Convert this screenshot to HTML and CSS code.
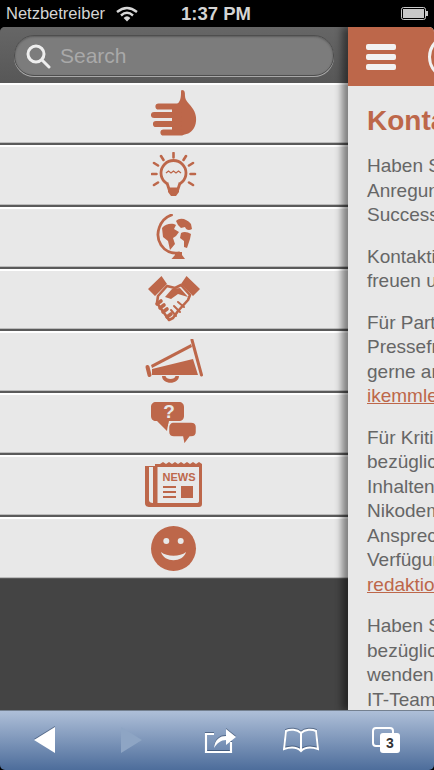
FILE: index.html
```html
<!DOCTYPE html>
<html>
<head lang="de">
    <meta charset="UTF-8">
    <title>Kontakt</title>
    <link rel="stylesheet" href="styles.css">
</head>
<body>
<div id="phone">
    <div id="status">
        <span class="carrier">Netzbetreiber</span>
        <svg class="wifi" width="24" height="16" viewBox="0 0 24 16">
            <path d="M2 6 Q12 -2 22 6" fill="none" stroke="#d8d8d8" stroke-width="2.4"/>
            <path d="M6 9.5 Q12 4 18 9.5" fill="none" stroke="#d8d8d8" stroke-width="2.4"/>
            <path d="M8.6 12 Q12 8.6 15.4 12 L12 15.5 Z" fill="#d8d8d8"/>
        </svg>
        <span class="time">1:37 PM</span>
        <svg class="battery" width="28" height="13" viewBox="0 0 28 13">
            <rect x="0.5" y="0.5" width="24" height="12" rx="2" fill="none" stroke="#c8c8c8"/>
            <rect x="2" y="2" width="21" height="9" fill="#c8c8c8"/>
            <rect x="25" y="4" width="2" height="5" fill="#c8c8c8"/>
        </svg>
    </div>

    <div id="main">
        <div id="menu">
            <div id="search">
                <div class="searchbox">
                    <svg width="26" height="26" viewBox="0 0 26 26">
                        <circle cx="11" cy="11" r="8" fill="none" stroke="#eeeeee" stroke-width="3"/>
                        <path d="M17 17 L24 24" stroke="#eeeeee" stroke-width="3" stroke-linecap="round"/>
                    </svg>
                    <span>Search</span>
                </div>
            </div>

            <ul id="items">
                <li>
                    <svg width="46" height="46" viewBox="0 0 46 46">
                        <path d="M31 0 C34 0 34 3 34 6 C34 11 39 14 42 19 C46 25 46 33 43 38 C40 43 35 45 30 45 H21 V14 H26 C29 12 30 8 30 3 C30 1 30 0 31 0 Z" fill="#bd674a"/>
                        <path d="M7.500 16.500 H28 M3 25 H28 M5 34 H28 M12.500 42.500 H30" fill="none" stroke="#bd674a" stroke-width="6.200" stroke-linecap="round"/>
                    </svg>
                </li>
                <li>
                    <svg width="46" height="46" viewBox="0 0 46 46">
                        <circle cx="22.500" cy="21" r="12.500" fill="none" stroke="#bd674a" stroke-width="2.800"/>
                        <path d="M16 31 L18 37 L27 37 L29 31" fill="#e8e8e8" stroke="#bd674a" stroke-width="2.800"/>
                        <path d="M17 36 H28 V40 L25 44 H20 L17 40 Z" fill="#bd674a"/>
                        <path d="M15 21 l2.500 -2 l2.500 2 l2.500 -2 l2.500 2 l2.500 -2 l2.500 2" fill="none" stroke="#bd674a" stroke-width="1.300"/>
                        <path d="M22.500 1 V5.500 M10 4 L12.500 8 M35 4 L32.500 8 M3 11 L7 13.500 M42 11 L38 13.500 M1 22 H5.500 M39.500 22 H44 M3 33 L7 30.500 M42 33 L38 30.500" stroke="#bd674a" stroke-width="2.600" stroke-linecap="round"/>
                    </svg>
                </li>
                <li>
                    <svg width="38" height="46" viewBox="0 0 38 46">
                        <path d="M16.500 1 C5 5 -1 20 6 31 C10 37 17 40 24 39" fill="none" stroke="#bd674a" stroke-width="2.800" stroke-linecap="round"/>
                        <path d="M20 38 H27 V41 L30 45 H16.500 L20 41 Z" fill="#bd674a"/>
                        <path d="M7 14 C11 9 18 9 21 11 L19 15 L24 18 L21 22 L18 24 L20 30 L15 36 L13 27 L8 23 Z" fill="#bd674a"/>
                        <path d="M21 7 C25 3 32 5 36 10 L37 15 C34 17 31 16 30 13 L26 14 L23 11 Z" fill="#bd674a"/>
                        <path d="M26 19 C29 17 33 18 36 20 L35 25 L32 34 L29 33 L29 27 L25 24 Z" fill="#bd674a"/>
                    </svg>
                </li>
                <li>
                    <svg width="52" height="46" viewBox="0 0 52 46">
                        <path d="M13.500 0 L19 8 L7 20 L0 13 Z M38.500 0 L33 8 L45 20 L52 13 Z" fill="#bd674a"/>
                        <path d="M10 20 L19 10 L27 12 L33 9 L42 19 L40 24 L30 35 L25 42 L21 44 L9 27 Z" fill="none" stroke="#bd674a" stroke-width="2.600" stroke-linejoin="round"/>
                        <path d="M17 21 L24 13 L32 12 L40 21 L30 18 L23 23 Z" fill="#bd674a"/>
                        <path d="M9 28 L13 25 M12 32 L16 29 M15 36 L19 33 M19 41 L23 38" stroke="#bd674a" stroke-width="3.600" stroke-linecap="round"/>
                        <path d="M30 26 L36 31 M26 30 L32 36 M23 34 L28 40" stroke="#bd674a" stroke-width="2" stroke-linecap="round"/>
                    </svg>
                </li>
                <li>
                    <svg width="58" height="45" viewBox="0 0 58 45">
                        <path d="M47 1 L56.500 36" stroke="#bd674a" stroke-width="3" stroke-linecap="round"/>
                        <path d="M2.500 28 L4.500 36" stroke="#bd674a" stroke-width="4" stroke-linecap="round"/>
                        <path d="M6 26 L46 5 L47 8 L7 29 Z" fill="#bd674a"/>
                        <path d="M7 30 L48 20 L53 36 L7 36 Z" fill="#bd674a"/>
                        <path d="M17 37 C17 46 34 46 34 37 L30.500 37 C30 41 21 41 20.500 37 Z" fill="#bd674a"/>
                    </svg>
                </li>
                <li>
                    <svg width="46" height="45" viewBox="0 0 46 45">
                        <path d="M5 1 H28 C31 1 33 3 33 6 V15 C33 18 31 20 28 20 H18 L16 30 L6 20 H5 C2 20 0 18 0 15 V6 C0 3 2 1 5 1 Z" fill="#bd674a"/>
                        <path d="M22 21 H40 C43 21 45.500 23 45.500 26 V31 C45.500 34 43 36 40 36 H39 L33 44 L31.500 36 H23 C20 36 17.500 34 17.500 31 V26 C17.500 23 20 21 22 21 Z" fill="#bd674a" stroke="#e8e8e8" stroke-width="1.500"/>
                        <text x="18" y="17" class="qmark">?</text>
                    </svg>
                </li>
                <li>
                    <svg width="58" height="46" viewBox="0 0 58 46">
                        <path d="M0 4 V41 C0 44 2 45 5 45 H54 C56 45 57 44 57 42 V2 L54 0 L51 2 L48 0 L45 2 L42 0 L39 2 L36 0 L33 2 L30 0 L27 2 L24 0 L21 2 L18 0 L15 2 L10 2 V4 Z" fill="#bd674a"/>
                        <path d="M12.500 5 H54 V39 C54 40.500 53 41 51.500 41 H12.500 Z" fill="#e8e8e8"/>
                        <path d="M4 5 H8 V41 C5.500 41 4 40 4 38 Z" fill="#e8e8e8"/>
                        <text x="17.500" y="19" class="news">NEWS</text>
                        <rect x="36" y="24" width="12" height="12" fill="#bd674a"/>
                        <path d="M18 25 H31 M18 30 H31 M18 35 H31" stroke="#bd674a" stroke-width="2"/>
                    </svg>
                </li>
                <li>
                    <svg width="46" height="46" viewBox="0 0 46 46">
                        <circle cx="22.500" cy="22.500" r="22.500" fill="#bd674a"/>
                        <circle cx="15.300" cy="15" r="3" fill="#e8e8e8"/>
                        <circle cx="29.700" cy="15" r="3" fill="#e8e8e8"/>
                        <path d="M10 26 C16 31 29 31 35 26 C32 37 13 37 10 26 Z" fill="#e8e8e8"/>
                    </svg>
                </li>
            </ul>
        </div>

        <div id="page">
            <div id="pagehead">
                <div class="burger"><i></i><i></i><i></i></div>
                <div class="logo"></div>
            </div>
            <div id="pagetext">
                <h1>Kontakt</h1>
                <p>Haben Sie Fragen oder<br>Anregungen zum Thema<br>Successful Ageing?</p>
                <p>Kontaktieren Sie uns, wir<br>freuen uns auf Sie!</p>
                <p>Für Partnerschaften und<br>Pressefragen stehen wir<br>gerne an dieser Stelle:<br><a href="#">ikemmler@example.de</a></p>
                <p>Für Kritik und Anregungen<br>bezüglich der redaktionellen<br>Inhalten steht Ihnen Frau<br>Nikodem als<br>Ansprechpartnerin zur<br>Verfügung:<br><a href="#">redaktion@example.de</a></p>
                <p>Haben Sie technische Fragen<br>bezüglich der Website,<br>wenden Sie sich an unser<br>IT-Team</p>
            </div>
        </div>
    </div>

    <div id="toolbar">
        <svg class="tool" width="24" height="28" viewBox="0 0 24 28"><path d="M22 1 V27 L1 14 Z" fill="#ffffff"/></svg>
        <svg class="tool fwd" width="24" height="28" viewBox="0 0 24 28"><path d="M2 1 V27 L23 14 Z" fill="#8ea5c4"/></svg>
        <svg class="tool share" width="34" height="28" viewBox="0 0 34 28">
            <path d="M10 8 H2 V26 H27 V16" fill="none" stroke="#ffffff" stroke-width="2.200"/>
            <path d="M10 22 C11 13 16 10 22 10 V3 L32 11 L22 19 V14 C17 14 13 17 10 22 Z" fill="#ffffff"/>
        </svg>
        <svg class="tool book" width="36" height="26" viewBox="0 0 36 26">
            <path d="M18 6 C14 2 7 2 3 4 L1 22 C7 20 14 20 18 24 C22 20 29 20 35 22 L33 4 C29 2 22 2 18 6 Z M18 6 V24" fill="none" stroke="#ffffff" stroke-width="2"/>
        </svg>
        <div class="tabs">
            <span class="back"></span>
            <span class="count">3</span>
        </div>
    </div>
</div>
</body>
</html>
```

FILE: styles.css
```css
* {
    margin: 0;
    padding: 0;
    box-sizing: border-box;
}

html, body {
    background: #000;
}

ul {
    list-style: none;
}

#phone {
    width: 434px;
    height: 770px;
    display: flex;
    flex-direction: column;
    overflow: hidden;
    font-family: "Liberation Sans", Arial, sans-serif;
}

#status {
    height: 27px;
    flex: none;
    display: flex;
    align-items: center;
    padding: 0 5px 0 6px;
    background: #000;
    color: #d4d4d4;
}

.carrier {
    font-size: 16.500px;
    width: 109px;
}

.wifi {
    flex: none;
}

.time {
    font-size: 18.500px;
    font-weight: bold;
    margin-left: 42px;
}

.battery {
    margin-left: auto;
}

#main {
    flex: 1;
    min-height: 0;
    display: flex;
    background: #444;
    border-radius: 5px 5px 0 0;
    overflow: hidden;
}

#menu {
    width: 348px;
    flex: none;
    background: #444;
}

#search {
    height: 56px;
    padding: 8px 14px 0;
    background: linear-gradient(#666, #575757);
}

.searchbox {
    height: 41px;
    border-radius: 20px;
    display: flex;
    align-items: center;
    gap: 9px;
    padding-left: 10px;
    background: #7c7c7c;
    border: 1px solid #4e4e4e;
    box-shadow: 0 1px 0 #a8a8a8, inset 0 1px 2px #5c5c5c;
    color: #a9a9a9;
    font-size: 21px;
}

#items li {
    height: 62px;
    display: flex;
    align-items: center;
    justify-content: center;
    padding-bottom: 2px;
    background: #e8e8e8;
    border-top: 2px solid #fff;
    border-bottom: 2px solid #5a5a5a;
    box-shadow: inset 0 -1px 0 #bbb;
}

#items li:last-child {
    padding-bottom: 0;
    border-bottom-width: 1px;
}

.qmark {
    font-family: "Liberation Sans", sans-serif;
    font-size: 19px;
    font-weight: bold;
    fill: #e8e8e8;
    text-anchor: middle;
}

.news {
    font-family: "Liberation Sans", sans-serif;
    font-size: 11px;
    font-weight: bold;
    fill: #bd674a;
}

#page {
    flex: 1;
    min-width: 0;
    display: flex;
    flex-direction: column;
    position: relative;
    background: #e8e8e8;
    box-shadow: -6px 0 7px rgba(0, 0, 0, 0.45);
    overflow: hidden;
}

#pagehead {
    height: 59px;
    flex: none;
    display: flex;
    align-items: center;
    gap: 32px;
    padding-left: 18px;
    background: #bd674a;
}

.burger {
    display: flex;
    flex-direction: column;
    gap: 4px;
}

.burger i {
    display: block;
    width: 30px;
    height: 6px;
    border-radius: 2px;
    background: #f2f2f2;
}

.logo {
    width: 46px;
    height: 46px;
    flex: none;
    border-radius: 50%;
    border: 3px solid #f2f2f2;
}

#pagetext {
    width: 300px;
    padding: 19px 0 0 19px;
    color: #666;
    font-size: 19px;
    line-height: 24.500px;
    white-space: nowrap;
}

#pagetext h1 {
    color: #bd674a;
    font-size: 28px;
    line-height: 32px;
    margin-bottom: 17px;
}

#pagetext p {
    margin-bottom: 17px;
}

#pagetext a {
    color: #bd674a;
}

#toolbar {
    height: 60px;
    flex: none;
    display: flex;
    align-items: center;
    padding: 0 0 2px 33px;
    background: linear-gradient(#aebfd8, #4d6d9b);
    border-top: 1px solid #74808f;
    border-radius: 0 0 5px 5px;
}

.tool {
    flex: none;
    filter: drop-shadow(0 -1px 0 rgba(30, 50, 80, 0.5));
}

.fwd {
    margin-left: 62px;
    filter: none;
}

.share {
    margin-left: 61px;
}

.book {
    margin-left: 45px;
}

.tabs {
    width: 28px;
    height: 26px;
    margin-left: 53px;
    position: relative;
}

.back {
    position: absolute;
    left: 0;
    top: 0;
    width: 22px;
    height: 20px;
    border: 2px solid #fff;
    border-radius: 4px;
}

.count {
    position: absolute;
    right: 0;
    bottom: 0;
    width: 20px;
    height: 20px;
    border-radius: 3px;
    background: #fff;
    color: #333;
    font-size: 14px;
    font-weight: bold;
    line-height: 20px;
    text-align: center;
}
```
